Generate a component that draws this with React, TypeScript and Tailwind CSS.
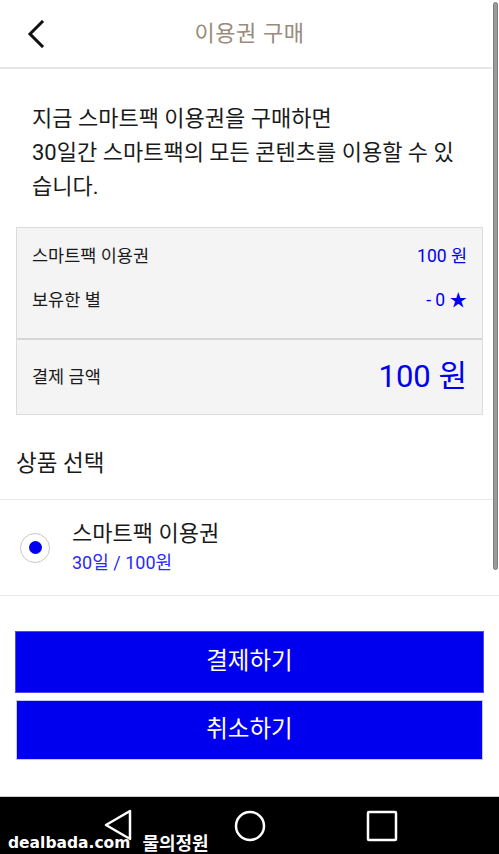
import React from "react";

const font = { fontFamily: "Roboto, 'Noto Sans CJK KR', sans-serif" };

const App = () => {
  return (
    <div
      className="relative w-[499px] h-[854px] bg-white flex flex-col overflow-hidden text-[#1a1a1a]"
      style={font}
    >
      {/* header */}
      <div className="relative h-[69px] shrink-0 flex items-center justify-center border-b-2 border-[#e6e6e6]">
        <svg
          className="absolute left-[26px] top-[20px]"
          width="20"
          height="28"
          viewBox="0 0 20 28"
          fill="none"
        >
          <path d="M16 2 L4 14 L16 26" stroke="#111" strokeWidth="3" strokeLinecap="square" />
        </svg>
        <p className="text-[22px] text-[#9a8b7a] tracking-wide">이용권 구매</p>
      </div>

      {/* intro */}
      <div className="pt-[33px] px-[32px] text-[22px] leading-[34px]">
        <p>지금 스마트팩 이용권을 구매하면</p>
        <p>30일간 스마트팩의 모든 콘텐츠를 이용할 수 있</p>
        <p>습니다.</p>
      </div>

      {/* summary box */}
      <div className="mx-[16px] mt-[23px] border border-[#dcdcdc] bg-[#f4f4f4]">
        <div className="pt-[6px] pb-[16px] px-[15px] border-b-2 border-[#d6d6d6]">
          <div className="h-[44px] flex items-center justify-between text-[17.5px]">
            <span>스마트팩 이용권</span>
            <span className="text-[#0000ee]">100 원</span>
          </div>
          <div className="h-[44px] flex items-center justify-between text-[17.5px]">
            <span>보유한 별</span>
            <span className="text-[#0000ee]">- 0 ★</span>
          </div>
        </div>
        <div className="h-[74px] px-[15px] flex items-center justify-between">
          <span className="text-[17.5px]">결제 금액</span>
          <span className="text-[31px] text-[#0000ee]">100 원</span>
        </div>
      </div>

      {/* product select */}
      <div className="pt-[32px] pb-[20px] px-[16px] border-b border-[#e8e8e8]">
        <p className="text-[22.5px] leading-[32px]">상품 선택</p>
      </div>
      <div className="h-[96px] flex items-center border-b border-[#e8e8e8]">
        <div className="ml-[20px] w-[30px] h-[30px] rounded-full border border-[#c8c8c8] flex items-center justify-center">
          <div className="w-[13px] h-[13px] rounded-full bg-[#0000ee]" />
        </div>
        <div className="ml-[22px] flex flex-col">
          <span className="text-[22px] leading-[30px]">스마트팩 이용권</span>
          <span className="text-[18px] leading-[28px] text-[#2a2aff]">30일 / 100원</span>
        </div>
      </div>

      {/* buttons */}
      <div className="pt-[35px] flex flex-col gap-[7px]">
        <button className="mx-[15px] h-[62px] bg-[#0000ee] border border-[#4a4af0] text-white text-[23.5px]">
          결제하기
        </button>
        <button className="mx-[16px] h-[60px] bg-[#0000ee] border border-[#c8c8e8] text-white text-[23.5px]">
          취소하기
        </button>
      </div>

      <div className="flex-1" />

      {/* android nav bar */}
      <div className="relative h-[58px] shrink-0 bg-black border-t border-[#cfcfcf] flex items-center">
        <svg className="absolute left-[103px] top-[12px]" width="30" height="32" viewBox="0 0 30 32" fill="none">
          <path d="M27 2 L27 30 L3 16 Z" stroke="white" strokeWidth="2.5" strokeLinejoin="round" />
        </svg>
        <svg className="absolute left-[234px] top-[13px]" width="32" height="32" viewBox="0 0 32 32" fill="none">
          <circle cx="16" cy="16" r="14" stroke="white" strokeWidth="2.5" />
        </svg>
        <svg className="absolute left-[366px] top-[13px]" width="32" height="32" viewBox="0 0 32 32" fill="none">
          <rect x="2" y="2" width="28" height="28" rx="1" stroke="white" strokeWidth="2.5" />
        </svg>
        <div className="absolute left-[8px] bottom-[1px] flex items-end gap-[12px]">
          <span
            className="text-white text-[15.5px] font-bold leading-[20px]"
            style={{ fontFamily: "'DejaVu Sans', sans-serif", textShadow: "0 0 2px #000" }}
          >
            dealbada.com
          </span>
          <span
            className="text-white text-[18px] font-bold leading-[22px]"
            style={{
              fontFamily: "'Noto Sans CJK KR', sans-serif",
              WebkitTextStroke: "2px black",
              paintOrder: "stroke fill",
            }}
          >
            물의정원
          </span>
        </div>
      </div>

      {/* scrollbar overlay */}
      <div className="absolute right-0 top-0 w-[7px] h-[574px] bg-white">
        <div className="ml-[1px] mt-[2px] w-[5px] h-[568px] rounded-full bg-[#9a9a9a] border border-[#7d7d7d]" />
      </div>
    </div>
  );
};

export default App;
